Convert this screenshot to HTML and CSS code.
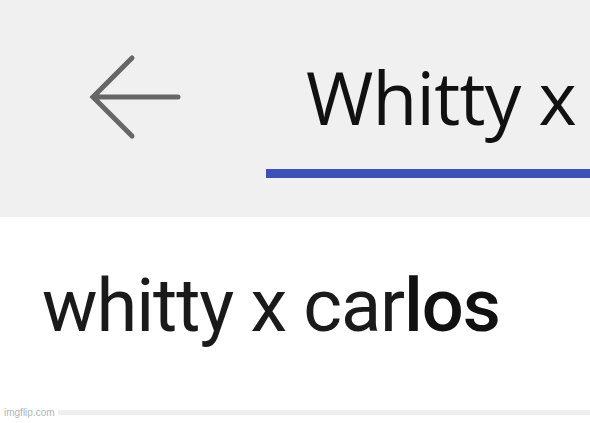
FILE: index.html
```html
<!DOCTYPE html>
<html>
<head>
<meta charset="utf-8">
<link rel="stylesheet" href="styles.css">
</head>
<body>
<div class="page">
  <header class="bar">
    <div class="back">
      <svg width="100" height="90" viewBox="0 0 100 90">
        <path d="M10 47 H95 M49 8 L10 47 L49 86" fill="none" stroke="#666" stroke-width="5" stroke-linecap="round" stroke-linejoin="miter"/>
      </svg>
    </div>
    <div class="field">
      <div class="query">Whitty x</div>
      <div class="underline"></div>
    </div>
  </header>
  <main class="results">
    <div class="suggestion">whitty x car<b>los</b></div>
  </main>
  <footer class="foot">
    <span class="mark">imgflip.com</span>
    <span class="strip"></span>
  </footer>
</div>
</body>
</html>
```

FILE: styles.css
```css
html, body {
  margin: 0;
  padding: 0;
  background: #fff;
}
.page {
  width: 590px;
  height: 423px;
  overflow: hidden;
  display: flex;
  flex-direction: column;
}
.bar {
  height: 217px;
  background: #f0f0f0;
  display: flex;
  align-items: flex-start;
  flex-shrink: 0;
}
.back {
  margin-left: 83px;
  margin-top: 50px;
  width: 100px;
  height: 90px;
}
.back svg {
  display: block;
}
.field {
  margin-left: 83px;
  flex: 1;
  min-width: 0;
  display: flex;
  flex-direction: column;
}
.query {
  margin-top: 50px;
  margin-left: 40px;
  font-family: "Open Sans", sans-serif;
  font-size: 73px;
  font-weight: 500;
  letter-spacing: -0.8px;
  line-height: 94px;
  color: #111;
  white-space: nowrap;
}
.underline {
  margin-top: 25px;
  height: 9px;
  background: #3f50b7;
}
.results {
  flex: 1;
  padding-left: 42px;
}
.suggestion {
  margin-top: 44px;
  font-family: Roboto, sans-serif;
  font-size: 74px;
  line-height: 90px;
  color: #1a1a1a;
  letter-spacing: -1.1px;
  white-space: nowrap;
}
.suggestion b {
  font-weight: 500;
  color: #111;
}
.foot {
  height: 14px;
  display: flex;
  align-items: center;
  gap: 3px;
  padding-left: 4px;
  margin-bottom: 4px;
}
.mark {
  font-family: "Liberation Sans", Arial, sans-serif;
  font-size: 10px;
  color: #b4b4b4;
}
.strip {
  flex: 1;
  height: 5px;
  background: #efefef;
}
```
